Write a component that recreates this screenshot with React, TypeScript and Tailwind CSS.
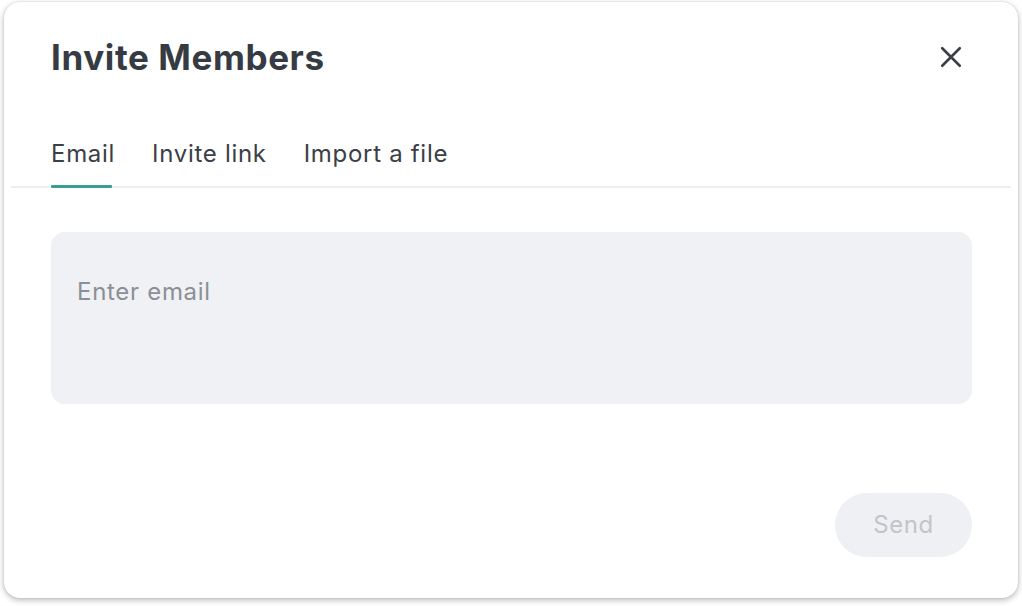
import React from "react";

export default function App() {
  return (
    <div className="w-[1022px] h-[606px] bg-white pt-[2px] pl-[4px]" style={{ fontFamily: "Inter, 'Noto Sans', sans-serif" }}>
      <div className="w-[1014px] h-[596px] rounded-[16px] bg-white shadow-[0_2px_6px_rgba(0,0,0,0.28),0_0_2px_rgba(0,0,0,0.12)] flex flex-col">
        <div className="flex items-center justify-between pl-[47px] pr-[50px] pt-[30px] h-[80px]">
          <h1 className="text-[35px] font-bold text-[#363b43] leading-[40px] tracking-[0.6px]">Invite Members</h1>
          <button className="w-[34px] h-[34px] flex items-center justify-center text-[#3a3f47]">
            <svg width="30" height="30" viewBox="0 0 24 24" fill="none" stroke="currentColor" strokeWidth="2.1" strokeLinecap="round">
              <path d="M5 5L19 19M19 5L5 19" />
            </svg>
          </button>
        </div>
        <div className="mt-[58px] mx-[7px] border-b-[2px] border-[#eceef2]">
          <div className="flex gap-[37px] pl-[40px]">
            <div className="relative pb-[18px] text-[24px] leading-[28px] tracking-[0.7px] text-[#3b4047]">
              Email
              <div className="absolute left-0 w-[61px] bottom-[-2px] h-[3px] bg-[#3a9e96] rounded-[1px]" />
            </div>
            <div className="pb-[18px] text-[24px] leading-[28px] tracking-[0.7px] text-[#3b4047]">Invite link</div>
            <div className="pb-[18px] text-[24px] leading-[28px] tracking-[0.7px] text-[#3b4047]">Import a file</div>
          </div>
        </div>
        <div className="mt-[44px] ml-[47px] w-[921px] h-[172px] rounded-[14px] bg-[#f0f1f4] pl-[26px] pt-[46px]">
          <div className="text-[24px] leading-[28px] tracking-[0.7px] text-[#8b8f95]">Enter email</div>
        </div>
        <div className="mt-[89px] flex justify-end pr-[46px]">
          <button className="w-[137px] h-[64px] rounded-full bg-[#eff0f3] text-[24px] tracking-[0.5px] text-[#c2c4c9]">Send</button>
        </div>
      </div>
    </div>
  );
}
